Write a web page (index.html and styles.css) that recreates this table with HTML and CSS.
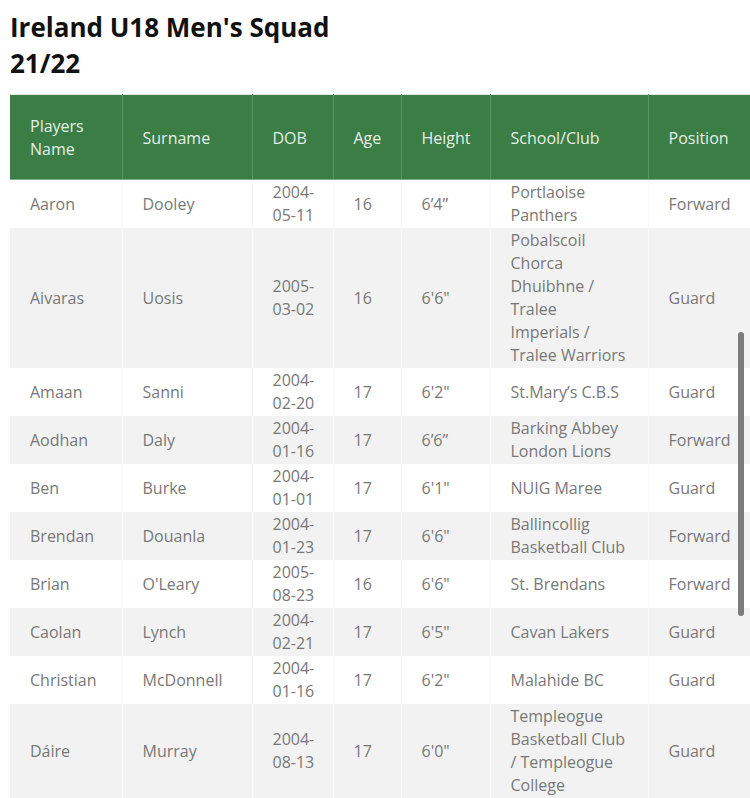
FILE: index.html
```html
<!DOCTYPE html>
<html lang="en">
<head>
<meta charset="utf-8">
<title>Ireland U18 Men's Squad 21/22</title>
<link rel="stylesheet" href="styles.css">
</head>
<body>
<main class="page">
  <h2 class="title">Ireland U18 Men's Squad 21/22</h2>
  <table class="squad">
    <colgroup>
      <col class="c-first"><col class="c-sur"><col class="c-dob"><col class="c-age"><col class="c-height"><col class="c-club"><col class="c-pos">
    </colgroup>
    <thead>
      <tr><th>Players Name</th><th>Surname</th><th>DOB</th><th>Age</th><th>Height</th><th>School/Club</th><th>Position</th></tr>
    </thead>
    <tbody>
      <tr><td>Aaron</td><td>Dooley</td><td class="dob">2004-05-11</td><td>16</td><td>6’4”</td><td>Portlaoise Panthers</td><td>Forward</td></tr>
      <tr><td>Aivaras</td><td>Uosis</td><td class="dob">2005-03-02</td><td>16</td><td>6'6"</td><td>Pobalscoil Chorca Dhuibhne / Tralee Imperials / Tralee Warriors</td><td>Guard</td></tr>
      <tr><td>Amaan</td><td>Sanni</td><td class="dob">2004-02-20</td><td>17</td><td>6'2"</td><td>St.Mary’s C.B.S</td><td>Guard</td></tr>
      <tr><td>Aodhan</td><td>Daly</td><td class="dob">2004-01-16</td><td>17</td><td>6’6”</td><td>Barking Abbey London Lions</td><td>Forward</td></tr>
      <tr><td>Ben</td><td>Burke</td><td class="dob">2004-01-01</td><td>17</td><td>6'1"</td><td>NUIG Maree</td><td>Guard</td></tr>
      <tr><td>Brendan</td><td>Douanla</td><td class="dob">2004-01-23</td><td>17</td><td>6'6"</td><td>Ballincollig Basketball Club</td><td>Forward</td></tr>
      <tr><td>Brian</td><td>O'Leary</td><td class="dob">2005-08-23</td><td>16</td><td>6'6"</td><td>St. Brendans</td><td>Forward</td></tr>
      <tr><td>Caolan</td><td>Lynch</td><td class="dob">2004-02-21</td><td>17</td><td>6'5"</td><td>Cavan Lakers</td><td>Guard</td></tr>
      <tr><td>Christian</td><td>McDonnell</td><td class="dob">2004-01-16</td><td>17</td><td>6'2"</td><td>Malahide BC</td><td>Guard</td></tr>
      <tr><td>Dáire</td><td>Murray</td><td class="dob">2004-08-13</td><td>17</td><td>6'0"</td><td>Templeogue Basketball Club / Templeogue College</td><td>Guard</td></tr>
    </tbody>
  </table>
</main>
<div class="scrollbar"></div>
</body>
</html>
```

FILE: styles.css
```css
html, body {
  margin: 0;
  padding: 0;
  overflow: hidden;
  background: #ffffff;
}

body {
  font-family: "Open Sans", "Liberation Sans", sans-serif;
  color: #787878;
}

.page {
  padding: 0 0 0 10px;
  width: 740px;
}

.title {
  margin: 9px 0 13px;
  max-width: 340px;
  font-size: 26px;
  line-height: 36px;
  font-weight: 700;
  color: #111111;
}

.squad {
  border-collapse: collapse;
  table-layout: fixed;
  width: 740px;
  font-size: 16px;
  line-height: 23px;
  border-top: 1px solid #dfe9df;
}

.c-first { width: 112px; }
.c-sur { width: 130px; }
.c-dob { width: 81px; }
.c-age { width: 68px; }
.c-height { width: 89px; }
.c-club { width: 158px; }
.c-pos { width: 102px; }

.squad th {
  background: #3a7d45;
  color: #e6efe6;
  font-weight: 400;
  text-align: left;
  padding: 20px 19px 18px 20px;
  border-left: 1px solid #5b9663;
  border-bottom: 1px solid #7fb087;
  height: 46px;
}

.squad th:first-child,
.squad td:first-child {
  border-left: none;
}

.squad td {
  padding: 1px 19px 1px 20px;
  vertical-align: middle;
  border-left: 1px solid #f8f8f8;
}

.squad td.dob {
  padding-right: 10px;
}

.squad tbody tr:nth-child(even) td {
  background: #f2f2f2;
}

.scrollbar {
  position: fixed;
  left: 738px;
  top: 332px;
  width: 6px;
  height: 284px;
  border-radius: 3px;
  background: #7b7b7b;
}
```
